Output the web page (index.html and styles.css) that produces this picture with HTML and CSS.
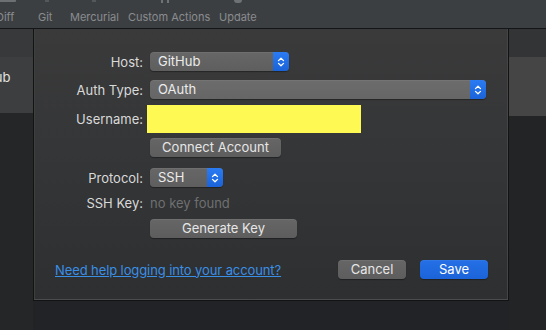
FILE: index.html
```html
<!DOCTYPE html>
<html>
<head>
<meta charset="utf-8">
<link rel="stylesheet" href="styles.css">
</head>
<body>
<div class="app">
  <div class="toolbar">
    <div class="tb-icons">
      <span class="ic ic-diff"></span>
      <span class="ic ic-git"></span>
      <span class="ic ic-hg"></span>
      <span class="ic ic-custom"></span>
      <span class="ic ic-update"></span>
    </div>
    <div class="tb-labels">
      <span class="tb-item">Diff</span>
      <span class="tb-item">Git</span>
      <span class="tb-item">Mercurial</span>
      <span class="tb-item">Custom Actions</span>
      <span class="tb-item">Update</span>
    </div>
  </div>
  <div class="main">
    <div class="pane pane-left">
      <div class="pane-head"></div>
      <div class="pane-row"><span class="acct-name">GitHub</span></div>
      <div class="pane-rest"></div>
    </div>
    <div class="dialog">
      <div class="form">
        <div class="row row-host">
          <label class="lbl">Host:</label>
          <div class="popup popup-host">
            <span class="popup-text">GitHub</span>
            <span class="popup-arrows"><svg width="8" height="12" viewBox="0 0 8 12"><path d="M1.5 4.6 L4 2.2 L6.5 4.6 M1.5 7.4 L4 9.8 L6.5 7.4" fill="none" stroke="#fff" stroke-width="1.3" stroke-linecap="round" stroke-linejoin="round"/></svg></span>
          </div>
        </div>
        <div class="row row-auth">
          <label class="lbl">Auth Type:</label>
          <div class="popup popup-auth">
            <span class="popup-text">OAuth</span>
            <span class="popup-arrows"><svg width="8" height="12" viewBox="0 0 8 12"><path d="M1.5 4.6 L4 2.2 L6.5 4.6 M1.5 7.4 L4 9.8 L6.5 7.4" fill="none" stroke="#fff" stroke-width="1.3" stroke-linecap="round" stroke-linejoin="round"/></svg></span>
          </div>
        </div>
        <div class="row row-user">
          <label class="lbl">Username:</label>
          <div class="redact"></div>
        </div>
        <div class="row row-connect">
          <span class="lbl"></span>
          <button class="btn btn-connect">Connect Account</button>
        </div>
        <div class="row row-proto">
          <label class="lbl">Protocol:</label>
          <div class="popup popup-proto">
            <span class="popup-text">SSH</span>
            <span class="popup-arrows"><svg width="8" height="12" viewBox="0 0 8 12"><path d="M1.5 4.6 L4 2.2 L6.5 4.6 M1.5 7.4 L4 9.8 L6.5 7.4" fill="none" stroke="#fff" stroke-width="1.3" stroke-linecap="round" stroke-linejoin="round"/></svg></span>
          </div>
        </div>
        <div class="row row-key">
          <label class="lbl">SSH Key:</label>
          <span class="muted">no key found</span>
        </div>
        <div class="row row-gen">
          <span class="lbl"></span>
          <button class="btn btn-gen">Generate Key</button>
        </div>
      </div>
      <div class="footer">
        <a class="help" href="#">Need help logging into your account?</a>
        <div class="actions">
          <button class="btn btn-cancel">Cancel</button>
          <button class="btn btn-save">Save</button>
        </div>
      </div>
    </div>
    <div class="pane pane-right">
      <div class="pane-head"></div>
      <div class="pane-row"></div>
      <div class="pane-rest"></div>
    </div>
  </div>
</div>
</body>
</html>
```

FILE: styles.css
```css
* { box-sizing: border-box; }
html, body { margin: 0; padding: 0; }
body {
  background: #212326;
  font-family: "Inter", "Noto Sans", sans-serif;
  font-size: 13px;
  color: #dcdcdc;
}
.app {
  width: 546px;
  height: 330px;
  overflow: hidden;
  display: flex;
  flex-direction: column;
  background: #212326;
}

/* toolbar */
.toolbar {
  height: 29px;
  flex: none;
  background: #3c3f42;
  border-bottom: 1px solid #141517;
  display: flex;
  flex-direction: column;
}
.tb-icons {
  height: 4px;
  display: grid;
  grid-template-columns: 42px 32px 58px 91px auto;
  margin-left: -4px;
}
.ic { display: block; height: 3px; }
.ic-diff { width: 20px; background: #6d7073; height: 2px; border-radius: 0 0 1px 1px; }
.ic-git { width: 4px; margin-left: 7px; background: #55585b; height: 2px; }
.ic-hg { width: 4px; margin-left: 22px; background: #55585b; height: 2px; }
.ic-custom { width: 8px; margin-left: 33px; border-left: 2px solid #707275; border-right: 2px solid #707275; }
.ic-update { width: 8px; margin-left: 15px; height: 3px; background: #6f7275; border-radius: 0 0 4px 4px; }
.tb-labels {
  display: grid;
  grid-template-columns: 42px 32px 58px 91px auto;
  margin-left: -4px;
  margin-top: 7px;
  font-size: 11px;
  line-height: 13px;
  color: #8a8c8f;
  white-space: nowrap;
}

/* main */
.main {
  flex: 1;
  display: flex;
  align-items: flex-start;
}
.pane {
  align-self: stretch;
  display: flex;
  flex-direction: column;
}
.pane-left { width: 33px; flex: none; overflow: hidden; }
.pane-right { flex: 1; }
.pane-head { height: 28px; flex: none; }
.pane-rest { flex: 1; }
.pane-left .pane-head { background: #38393b; }
.pane-left .pane-row {
  height: 56px;
  background: #3d3e40;
  display: flex;
  align-items: flex-start;
  padding-top: 12px;
  white-space: nowrap;
}
.acct-name { margin-left: -32px; color: #e2e2e2; font-size: 13px; }
.pane-left .pane-rest { background: #242628; }
.pane-right .pane-head { background: #323436; }
.pane-right .pane-row { height: 59px; background: #454546; }
.pane-right .pane-rest { background: #222426; }

/* dialog */
.dialog {
  width: 476px;
  height: 272px;
  flex: none;
  border: 1px solid #131313;
  border-top: none;
  background: linear-gradient(#3a3a3b, #353637 45%, #2d2f31);
  box-shadow: inset 0 -1px 0 #4a4b4c, inset 1px 0 0 #3e3f40, inset -1px 0 0 #444546;
  padding-top: 23px;
  display: flex;
  flex-direction: column;
}
.row {
  display: flex;
  align-items: center;
  gap: 7px;
  height: 19px;
}
.lbl {
  width: 109px;
  flex: none;
  text-align: right;
  color: #d9d9d9;
}
.row-auth { margin-top: 9px; }
.row-user { margin-top: 6px; height: 28px; }
.row-connect { margin-top: 5px; }
.row-proto { margin-top: 11px; }
.row-key { margin-top: 6px; }
.row-gen { margin-top: 7px; }

.popup {
  height: 19px;
  display: flex;
  border-radius: 4px;
  background: linear-gradient(#676767, #5e5e5e);
  box-shadow: 0 1px 1px rgba(0,0,0,0.35), inset 0 1px 0 rgba(255,255,255,0.06);
  overflow: hidden;
}
.popup-host { width: 139px; }
.popup-auth { width: 336px; background: linear-gradient(#6c6c6c, #666); }
.popup-proto { width: 73px; }
.popup-text {
  flex: 1;
  padding-left: 8px;
  line-height: 19px;
  color: #ececec;
}
.popup-arrows {
  width: 16px;
  flex: none;
  display: flex;
  align-items: center;
  justify-content: center;
  background: linear-gradient(#2b7bf2, #1a63d9);
}
.redact {
  width: 214px;
  height: 28px;
  margin-left: -3px;
  background: #fef953;
}
.btn {
  font: inherit;
  height: 19px;
  padding: 0;
  border: none;
  border-radius: 4px;
  background: linear-gradient(#666, #5d5d5d);
  box-shadow: 0 1px 1px rgba(0,0,0,0.35), inset 0 1px 0 rgba(255,255,255,0.06);
  color: #e6e6e6;
  line-height: 19px;
  text-align: center;
}
.btn-connect { width: 131px; }
.btn-gen { width: 147px; }
.muted { color: #6f7071; }

.footer {
  margin-top: 22px;
  display: flex;
  align-items: center;
  justify-content: space-between;
  padding: 0 20px 0 21px;
}
.help {
  color: #3a8fe6;
  text-decoration: underline;
  letter-spacing: -0.1px;
}
.actions { display: flex; gap: 14px; }
.btn-cancel { width: 68px; }
.btn-save {
  width: 68px;
  color: #fff;
  background: linear-gradient(#2570e6, #1b63d8);
}
```
